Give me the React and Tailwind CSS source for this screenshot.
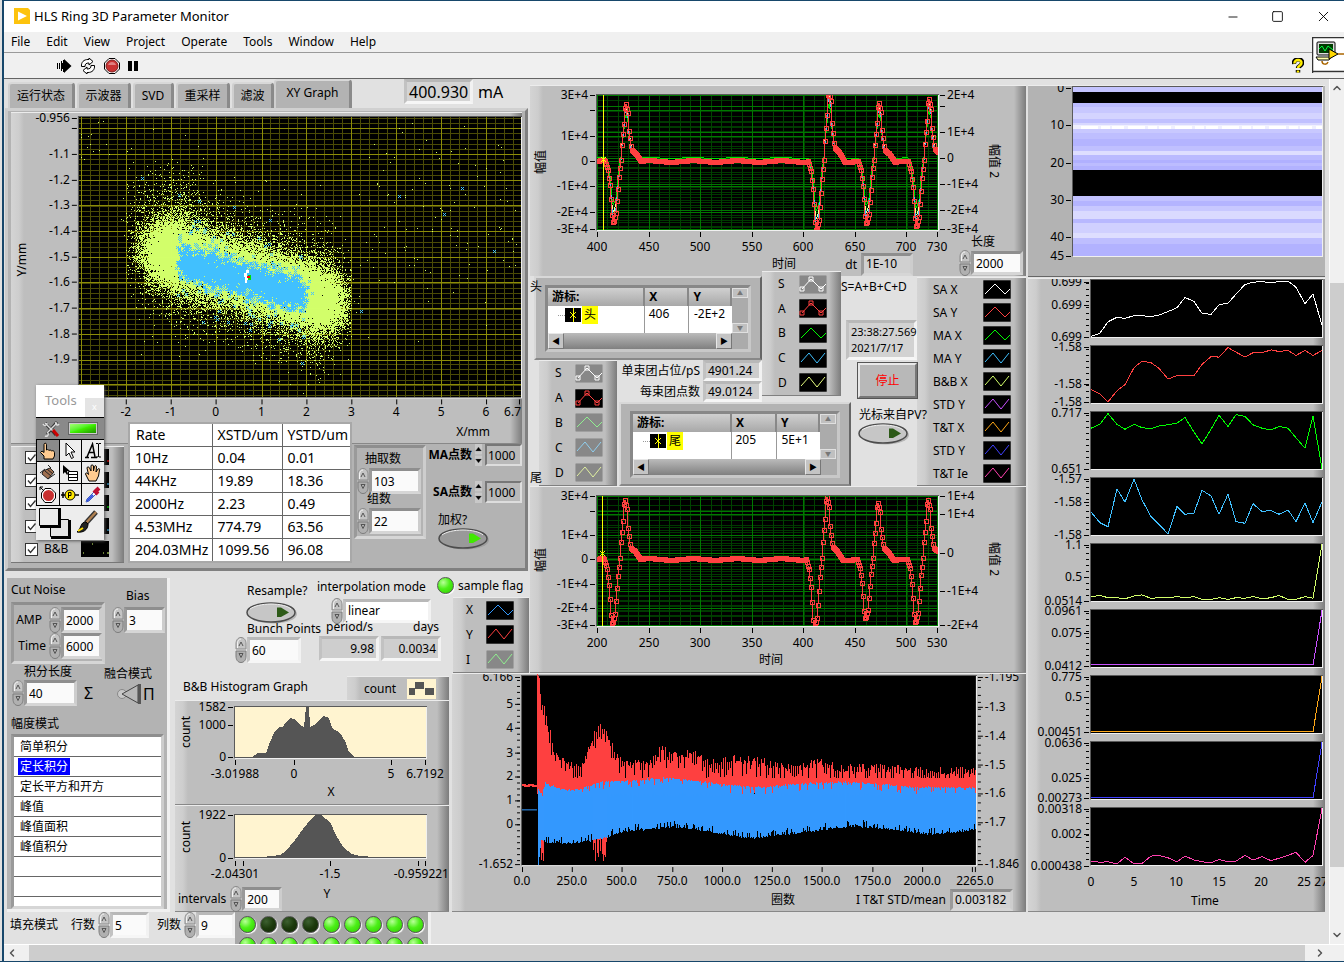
import { useId } from "react";
import clsx from "clsx";
import { ChevronDown, ChevronLeft, ChevronRight, ChevronUp, Minus, Square, X } from "lucide-react";

const PANEL =
  "bg-[linear-gradient(90deg,#d4d4d4_0,#cdcdcd_8px,#bebebe_13px,#bebebe_calc(100%-12px),#7c7c7c_100%)] border-t border-[#ececec]";
const INSET = "border-[3px] border-t-[#8e8e8e] border-l-[#9a9a9a] border-r-[#cdcdcd] border-b-[#d6d6d6]";
const INSET_LIGHT = "border-[3px] border-t-[#b8b8b8] border-l-[#c2c2c2] border-r-[#f2f2f2] border-b-[#f6f6f6]";

// ---------- data ----------

function random(seed) {
  let s = seed;
  return () => {
    s = (s * 1664525 + 1013904223) % 4294967296;
    return s / 4294967296;
  };
}

function gauss(rnd) {
  return Math.sqrt(-2 * Math.log(rnd() + 1e-9)) * Math.cos(2 * Math.PI * rnd());
}

function pixelPath(cells, left, top, width, height) {
  let d = "";
  for (let y = 0; y < height; y++) {
    let x = 0;
    while (x < width) {
      if (!cells[y * width + x]) {
        x++;
        continue;
      }
      let run = 1;
      while (x + run < width && cells[y * width + x + run]) run++;
      d += `M${left + x} ${top + y}.5h${run}`;
      x += run;
    }
  }
  return d;
}

function makeScatter() {
  const left = 79, top = 117, w = 443, h = 281;
  const green = new Uint8Array(w * h);
  const blue = new Uint8Array(w * h);
  const rnd = random(7);
  const plot = (cells, px, py) => {
    const x = Math.round(px) - left;
    const y = Math.round(py) - top;
    if (x >= 0 && x < w && y >= 0 && y < h) cells[y * w + x] = 1;
  };
  for (let i = 0; i < 62000; i++) {
    const t = rnd() < 0.55 ? Math.cos(rnd() * 2 * Math.PI) : rnd() * 2 - 1;
    const x = 244 + 82 * t + gauss(rnd) * 13;
    const wide = rnd() < 0.16 ? 29 : 15;
    const y = 276 + 26 * t + gauss(rnd) * wide;
    if ((x > 126 && x < 352) || rnd() < 0.08) plot(green, x, y);
  }
  for (let i = 0; i < 500; i++) {
    plot(green, 130 + rnd() * 70 + gauss(rnd) * 5, 215 + gauss(rnd) * 26);
  }
  for (let i = 0; i < 110; i++) {
    plot(green, 360 + rnd() * 160, 215 + gauss(rnd) * 45);
  }
  for (let i = 0; i < 14; i++) plot(green, 80 + rnd() * 30, 120 + rnd() * 40);
  const cross = (x, y) => {
    plot(blue, x, y);
    plot(blue, x - 1, y - 1);
    plot(blue, x + 1, y - 1);
    plot(blue, x - 1, y + 1);
    plot(blue, x + 1, y + 1);
  };
  for (let i = 0; i < 2900; i++) {
    const t = rnd() * 2 - 1;
    cross(242 + 61 * t + gauss(rnd) * 3, 278 + 17 * t + gauss(rnd) * 8);
  }
  for (let i = 0; i < 220; i++) {
    const t = rnd() * 2 - 1;
    cross(242 + 64 * t, 278 + 20 * t + gauss(rnd) * 22);
  }
  [[142, 178], [179, 195], [199, 201], [234, 207], [271, 220], [400, 196], [463, 188], [445, 214], [495, 251], [362, 311]].forEach(
    ([x, y]) => cross(x, y)
  );
  return [pixelPath(green, left, top, w, h), pixelPath(blue, left, top, w, h)];
}

const SCATTER = makeScatter();

// one bunch: negative swing, then positive swing with a tail
const BUNCH = [
  [-8, 0, 0], [-7, 0.05, 0], [-5, 0.15, 0], [-3, 0.4, 0], [-2, 0.62, 0], [-1, 0.88, 0], [0, 1, 0], [1, 0.98, 0], [3, 0.86, 0],
  [4, 0.66, 0], [6, 0.26, 0], [8, 0, 0.02], [9, 0, 0.28], [11, 0, 0.65], [12, 0, 0.93], [13, 0, 1], [15, 0, 0.84],
  [16, 0, 0.53], [18, 0, 0.26], [19, 0, 0.19], [23, 0, 0.13], [28, 0, 0],
];

function bunchWave(base, bunches, gain = 1, tail = 0) {
  const pts = [];
  for (let x = 597; x <= 938; x++) {
    let y = base + Math.sin(x / 7) * 0.7 - tail;
    for (const [cx, low, high] of bunches) {
      const dx = x - cx;
      if (dx < -8 || dx > 28) continue;
      const k = BUNCH.findIndex((b) => b[0] >= dx);
      const b = BUNCH[k];
      const a = BUNCH[Math.max(0, k - 1)];
      const f = b[0] === a[0] ? 0 : (dx - a[0]) / (b[0] - a[0]);
      const down = a[1] + (b[1] - a[1]) * f;
      const up = a[2] + (b[2] - a[2]) * f;
      y = base + (down * (low - base) + up * (high - base)) * gain - tail;
    }
    pts.push([x, y]);
  }
  return pts;
}

const toLine = (pts) => "M" + pts.map(([x, y]) => `${x} ${y.toFixed(1)}`).join("L");

function lerpKeys(keys, x) {
  const k = keys.findIndex((p) => p[0] >= x);
  if (k <= 0) return keys[k === 0 ? 0 : keys.length - 1][1];
  const [x0, y0] = keys[k - 1];
  const [x1, y1] = keys[k];
  return y0 + ((y1 - y0) * (x - x0)) / (x1 - x0);
}

const RED_TOP = [
  [537, 676], [539, 680], [541, 700], [545, 706], [547, 722], [550, 732], [554, 750], [560, 758], [570, 764], [584, 761],
  [590, 742], [596, 726], [602, 722], [606, 732], [612, 744], [618, 758], [630, 760], [652, 759], [662, 745], [670, 752],
  [690, 750], [698, 752], [710, 762], [722, 758], [740, 757], [760, 759], [790, 765], [822, 760], [840, 766], [880, 765],
  [920, 768], [978, 769],
];
const BLUE_TOP = [
  [537, 676], [538, 790], [541, 794], [545, 783], [560, 789], [575, 790], [600, 782], [650, 778], [670, 777], [695, 780],
  [725, 785], [765, 787], [800, 784], [840, 782], [870, 783], [910, 787], [978, 788],
];
const BLUE_LOW = [
  [537, 676], [538, 866], [541, 842], [550, 845], [575, 845], [600, 841], [622, 834], [650, 831], [672, 829], [695, 831],
  [735, 838], [756, 840], [790, 836], [830, 831], [858, 828], [900, 832], [930, 836], [950, 835], [978, 831],
];

function makeBeam() {
  const rnd = random(21);
  let red = "";
  let blue = "";
  for (let x = 537; x < 978; x++) {
    const jump = x % 2 ? rnd() * 22 : rnd() * 9;
    const top = Math.min(778, lerpKeys(RED_TOP, x) - 2 + (x < 540 ? 0 : jump));
    let low = 794 + rnd() * 4;
    if (x > 539 && x < 544) low = 848 + rnd() * 18;
    if (x > 592 && x < 607) low = 840 + rnd() * 22;
    red += `M${x}.5 ${top.toFixed(0)}V${low.toFixed(0)}`;
    const notch = rnd() < 0.25 ? rnd() * 9 : rnd() * 2;
    const spike = rnd() < 0.35 ? rnd() * 8 : rnd() * 2;
    const bt = lerpKeys(BLUE_TOP, x) + (x < 539 ? 0 : notch);
    const bl = lerpKeys(BLUE_LOW, x) - (x < 540 ? 0 : spike);
    blue += `M${x}.5 ${bt.toFixed(0)}V${bl.toFixed(0)}`;
  }
  return [red, blue];
}

const BEAM = makeBeam();

const flat = (v, last = 0) => [...Array(27).fill(v), last];

const STRIPS = [
  { y: 280, color: "#ffffff", labels: [[282, "0.699"], [305, "0.699"], [337, "0.699"]], max: 99,
    data: [99, 93, 73, 65, 67, 62, 62, 64, 61, 55, 48, 30, 37, 58, 60, 43, 40, 24, 7, 3, 2, 4, 2, 1, 12, 41, 24, 79] },
  { y: 346, color: "#ff4040", labels: [[347, "-1.58"], [384, "-1.58"], [402, "-1.58"]], max: 100,
    data: [77, 85, 99, 79, 68, 38, 26, 29, 39, 58, 52, 52, 52, 32, 18, 19, 2, 10, 19, 11, 11, 6, 9, 7, 16, 7, 16, 7] },
  { y: 412, color: "#00ff00", labels: [[413, "0.717"], [469, "0.651"]], max: 100,
    data: [28, 21, 2, 21, 30, 21, 27, 29, 24, 22, 19, 9, 35, 56, 30, 5, 25, 4, 7, 22, 28, 31, 25, 28, 45, 64, 7, 100] },
  { y: 478, color: "#40c0ff", labels: [[479, "-1.57"], [502, "-1.58"], [535, "-1.58"]], max: 100,
    data: [60, 79, 86, 19, 42, 1, 38, 68, 82, 99, 50, 64, 62, 21, 31, 64, 28, 77, 80, 45, 59, 57, 64, 56, 77, 44, 79, 42] },
  { y: 544, color: "#d3ff6a", labels: [[545, "1.1"], [577, "0.5"], [601, "0.0514"]], max: 100,
    data: [93, 91, 95, 95, 97, 92, 90, 96, 95, 95, 93, 95, 93, 98, 98, 95, 98, 95, 96, 93, 97, 95, 91, 98, 98, 93, 96, 0] },
  { y: 610, color: "#c850ff", labels: [[611, "0.0961"], [633, "0.075"], [666, "0.0412"]], max: 100, data: flat(97) },
  { y: 676, color: "#ffa818", labels: [[677, "0.775"], [697, "0.5"], [732, "0.00451"]], max: 100, data: flat(99) },
  { y: 742, color: "#4040ff", labels: [[743, "0.0636"], [778, "0.025"], [798, "0.00273"]], max: 100, data: flat(99) },
  { y: 808, color: "#ff40b0", labels: [[809, "0.00318"], [834, "0.002"], [866, "0.000438"]], max: 100,
    data: [94, 96, 95, 99, 87, 99, 98, 85, 84, 88, 95, 85, 92, 95, 97, 91, 95, 94, 84, 92, 86, 93, 89, 84, 78, 96, 84, 0] },
];

const BANDS = [
  [87, 92, "#c4c4ff"], [92, 103, "#000"], [103, 107, "#bcbcff"], [107, 113, "#c8c8ff"], [113, 119, "#d4d4ff"],
  [119, 123, "#c0c0ff"], [123, 125, "#d8d8ff"], [125, 129, "#efefff"], [129, 133, "#c8c8ff"], [133, 139, "#bebeff"],
  [139, 146, "#b4b4ff"], [146, 151, "#c0c0ff"], [151, 155, "#dedeff"], [155, 160, "#babaff"], [160, 163, "#b0b0ff"],
  [163, 166, "#bcbcff"], [166, 170, "#b2b2ff"], [170, 196, "#000"], [196, 201, "#c2c2ff"], [201, 206, "#b4b4ff"],
  [206, 211, "#c8c8ff"], [211, 219, "#dadaff"], [219, 223, "#b8b8ff"], [223, 233, "#d0d0ff"], [233, 238, "#dedeff"],
  [238, 244, "#bebeff"], [244, 256, "#b2b2ff"],
];

// ---------- chart helpers ----------

function Chart({ box, label, children }) {
  return (
    <svg
      viewBox={box}
      role="img"
      aria-label={label}
      className="block w-full overflow-hidden text-xs"
      fontFamily='"Noto Sans", "Noto Sans CJK SC", sans-serif'
    >
      {children}
    </svg>
  );
}

function Label({ x, y, anchor = "middle", children, ...rest }) {
  return (
    <text x={x} y={y + 4} textAnchor={anchor} {...rest}>
      {children}
    </text>
  );
}

function XAxis({ y, ticks, drop = 15 }) {
  return ticks.map(([x, text]) => (
    <g key={x}>
      <path d={`M${x + 0.5} ${y}v5`} stroke="#000" />
      {text && <Label x={x} y={y + drop}>{text}</Label>}
    </g>
  ));
}

function YAxis({ x, ticks, right }) {
  return ticks.map(([y, text]) => (
    <g key={y}>
      <path d={`M${x} ${y + 0.5}h${right ? 5 : -5}`} stroke="#000" />
      {text && <Label x={right ? x + 7 : x - 7} y={y} anchor={right ? "start" : "end"}>{text}</Label>}
    </g>
  ));
}

function lines(from, to, step, a, b, vertical) {
  let d = "";
  for (let v = from; v <= to; v += step) {
    const p = Math.round(v) + 0.5;
    d += vertical ? `M${p} ${a}V${b}` : `M${a} ${p}H${b}`;
  }
  return d;
}

function PlotFrame({ x, y, w, h, fill = "#000" }) {
  return (
    <>
      <rect x={x - 1} y={y - 1} width={w + 2} height={h + 2} fill="#f0f0f0" />
      <path d={`M${x - 1} ${y + h + 1}V${y - 1}H${x + w + 1}V${y}H${x}V${y + h}z`} fill="#5a5a5a" />
      <rect x={x} y={y} width={w} height={h} fill={fill} />
    </>
  );
}

function WaveChart({ box, label, top, bottom, base, bunches, left, right, x, cursor, extra, xLabelY }) {
  const pts = bunchWave(base, bunches);
  const dense = pts.filter(([, y], i) => i > 0 && Math.abs(y - pts[i - 1][1]) < 2);
  const clip = useId();
  return (
    <Chart box={box} label={label}>
      <clipPath id={clip}>
        <rect x="597" y={top} width="341" height={bottom - top} />
      </clipPath>
      <PlotFrame x={597} y={top} w={341} h={bottom - top} />
      <g clipPath={`url(#${clip})`} fill="none" shapeRendering="crispEdges">
        <path d={lines(left[2][0] - 40.6, bottom, 5.08, 597, 938)} stroke="#003a00" />
        <path d={lines(right[2][0] - 26, bottom, 5.2, 597, 938)} stroke="#003a00" />
        <path d={lines(597, 938, 10.33, top, bottom, true)} stroke="#004400" />
        <path d={x.map(([p]) => `M${p + 0.5} ${top}V${bottom}`).join("")} stroke="#007800" />
        <path d={[...left, ...right].map(([p]) => `M597 ${p + 0.5}H938`).join("")} stroke="#007800" />
        {extra && (
          <>
            <path d={toLine(bunchWave(base, bunches, 0.88, 3))} stroke="#f0ff90" />
            <path d={toLine(bunchWave(base, bunches, 0.76, 3))} stroke="#00e000" />
            <path d={toLine(bunchWave(base, bunches, 0.9, 0))} stroke="#40c0ff" />
          </>
        )}
        <path d={toLine(pts)} stroke="#ff4040" />
        <path d={pts.map(([px, py]) => `M${px - 2} ${Math.round(py) - 2}h4v4h-4z`).join("")} stroke="#ff4040" transform="translate(.5 .5)" />
        <path d={dense.map(([px, py]) => `M${px}.5 ${Math.round(py) - 2}v5`).join("")} stroke="#ff4040" />
        <path d={`M${cursor[0] + 0.5} ${top}V${bottom}`} stroke="#ffff00" />
        <path d={`M${cursor[0] - 2} ${cursor[1] - 2}l5 5m0 -5l-5 5`} stroke="#ffff00" />
      </g>
      <YAxis x={595} ticks={left} />
      <YAxis x={940} ticks={right} right />
      <XAxis y={bottom + 2} ticks={x} />
      <text transform={`translate(545 ${base + 1}) rotate(-90)`} textAnchor="middle">幅值</text>
      <text transform={`translate(990 ${base}) rotate(90)`} textAnchor="middle">幅值 2</text>
      <Label x={extra ? 784 : 771} y={xLabelY}>时间</Label>
    </Chart>
  );
}

// ---------- small controls ----------

function Spinner({ className }) {
  return (
    <svg viewBox="0 0 12 26" className={clsx("h-[26px] w-3 shrink-0", className)} aria-hidden="true">
      <path d="M1 12V7C1 3 3 .5 6 .5S11 3 11 7v5z" fill="#c4c4c4" stroke="#8d8d8d" />
      <path d="M1 14v5c0 4 2 6.500 5 6.500s5-2.500 5-6.500v-5z" fill="#b0b0b0" stroke="#7d7d7d" />
      <path d="M2.500 11V7c0-3 1-5 3.500-5" fill="none" stroke="#f4f4f4" />
      <path d="M4 9l2-4 2 4" fill="none" stroke="#555" />
      <path d="M4 16.500h4l-2 4z" fill="none" stroke="#555" />
    </svg>
  );
}

function NumberInput({ id, value, className, light }) {
  return (
    <span className="flex items-center">
      <Spinner />
      <input
        id={id}
        defaultValue={value}
        className={clsx("min-w-0 bg-[#fafafa] px-[2px] leading-4 outline-none", light ? INSET_LIGHT : INSET, className)}
      />
    </span>
  );
}

function Toggle({ id, on }) {
  return (
    <button id={id} type="button" aria-pressed={on} className="block h-[22px] w-[52px]">
      <svg viewBox="0 0 52 22" className="block" aria-hidden="true">
        <ellipse cx="27" cy="12" rx="24" ry="9.500" fill="#8a8a8a" opacity=".5" />
        <ellipse cx="25" cy="10.500" rx="24" ry="9.500" fill={on ? "#999" : "#c6c6c6"} stroke="#4c4c4c" strokeWidth="1.500" />
        <path d="M4 7c4-3 12-5 21-5s17 2 20 5" fill="none" stroke="#eee" />
        <path d="M31 5.500l4 0 8 5-8 4.500-4 0z" fill={on ? "#40e800" : "#2d5a18"} />
      </svg>
    </button>
  );
}

function Led({ off }) {
  return (
    <span
      className={clsx(
        "block size-[17px] shrink-0 rounded-full border border-[#555] shadow-[1px_1px_1px_#fff]",
        off
          ? "bg-[radial-gradient(circle_at_35%_30%,#3d6030,#1c3a0c_50%,#122806)]"
          : "bg-[radial-gradient(circle_at_35%_30%,#b8ff98,#4cf018_45%,#30c800)]"
      )}
    />
  );
}

const SHAPES = {
  marks: "M3 14L12 4L22 14L27 9",
  hill: "M2 14L12 4L22 14L27 9",
  zig: "M2 13L10 4L18 14L26 4",
};

function Swatch({ color, shape = "hill", dim }) {
  return (
    <svg viewBox="0 0 28 19" className="block h-[19px] w-7 shrink-0" aria-hidden="true">
      <rect width="28" height="19" fill={dim ? "#888" : "#000"} stroke={dim ? "#e8e8e8" : "#ddd"} strokeWidth=".5" />
      <path d={SHAPES[shape]} fill="none" stroke={color} />
      {shape === "marks" && <path d="M1 12h4v4h-4zM10 2h4v4h-4zM20 12h4v4h-4z" fill="none" stroke={color} />}
    </svg>
  );
}

function Legend({ items, className, rowClass }) {
  return (
    <ul className={clsx("flex flex-col border-b border-b-[#808080]", PANEL, className)}>
      {items.map(([name, color, shape, dim], i) => (
        <li key={i} className={clsx("flex items-center justify-between", rowClass)}>
          <span>{name}</span>
          <Swatch color={color} shape={shape} dim={dim} />
        </li>
      ))}
    </ul>
  );
}

// ---------- window chrome ----------

function TitleBar() {
  return (
    <header className="flex h-8 shrink-0 items-center justify-between border-t border-[#17476b] bg-white pl-[10px]">
      <div className="flex items-center gap-1">
        <svg viewBox="0 0 16 16" className="size-4" aria-hidden="true">
          <path d="M0 0h14l2 2v14H0z" fill="#fdc30d" />
          <path d="M4 3.500v9l9-4.500z" fill="#fff" />
        </svg>
        <h1 className="text-[13px]">HLS Ring 3D Parameter Monitor</h1>
      </div>
      <div className="flex items-center gap-[31px] pr-[12px]">
        <button aria-label="Minimize"><Minus size={14} strokeWidth={1.5} /></button>
        <button aria-label="Maximize"><Square size={13} strokeWidth={1.6} /></button>
        <button aria-label="Close"><X size={17} strokeWidth={1.3} /></button>
      </div>
    </header>
  );
}

function MenuBar() {
  const menus = ["File", "Edit", "View", "Project", "Operate", "Tools", "Window", "Help"];
  return (
    <nav className="flex h-[21px] shrink-0 items-center gap-4 border-b border-[#9a9a9a] bg-[#f0f0f0] pl-[7px]">
      {menus.map((m) => (
        <button key={m}>{m}</button>
      ))}
    </nav>
  );
}

function Toolbar() {
  return (
    <div className="relative flex h-[26px] shrink-0 items-center gap-[7px] border-b border-[#646464] bg-[#f0f0f0] pl-[53px]">
      <button aria-label="Run">
        <svg viewBox="0 0 16 14" className="h-[14px] w-4" aria-hidden="true">
          <path d="M7 4V0l7.500 7L7 14v-4H5V4z" fill="#000" />
          <path d="M.5 4v6M2.500 4v6M4.500 2v2M4.500 10v2M4.500 4v6M6.500 1v3M6.500 10v3" stroke="#000" />
        </svg>
      </button>
      <button aria-label="Run continuously">
        <svg viewBox="0 0 16 16" className="size-4" fill="#fff" stroke="#000" aria-hidden="true">
          <path d="M1.500 8.500C1 4 4 1.500 8 1.500h1V0l4 3.500L9 7V5C6 5 5 6 5 8.500z" />
          <path d="M14.500 7.500c.5 4.500-2.500 7-6.500 7H7V16l-4-3.500L7 9v2c3 0 4-1 4-3.500z" />
        </svg>
      </button>
      <button aria-label="Abort">
        <svg viewBox="0 0 16 16" className="ml-px size-4" aria-hidden="true">
          <path d="M5 .5h6L15.500 5v6L11 15.500H5L.5 11V5z" fill="#fff" stroke="#000" />
          <circle cx="8" cy="8" r="6" fill="#c93333" stroke="#7c1c1c" />
          <path d="M4 7c1-4 7-4 8 0z" fill="#e08080" />
        </svg>
      </button>
      <button aria-label="Pause">
        <svg viewBox="0 0 10 10" className="ml-px size-[10px]" aria-hidden="true">
          <path d="M0 0h4v10H0zM6 0h4v10H6z" />
        </svg>
      </button>
      <button aria-label="Help" className="mr-10 ml-auto">
        <svg viewBox="0 0 12 16" className="h-4 w-3" aria-hidden="true">
          <path d="M2 6C1 0 11 0 10 5c0 3-4 3-4 5M6 12v2.500" fill="none" stroke="#000" strokeWidth="4.500" />
          <path d="M2.500 5.500C2 .8 10 .8 9.500 5c0 2.500-3.500 3-3.500 5M6 12.500v2" fill="none" stroke="#ffee00" strokeWidth="2.500" />
        </svg>
      </button>
      <svg viewBox="0 0 32 36" className="absolute right-0 bottom-[5px] h-9 w-8" aria-hidden="true">
        <path d="M0 0h32v36H0z" fill="#fff" />
        <path d="M.5 36V.5H32M0 34.500H32" fill="none" stroke="#333" strokeWidth="1.500" />
        <rect x="5" y="5" width="18" height="13" rx="1" fill="#ddd" stroke="#000" />
        <rect x="7" y="7" width="14" height="9" fill="#003c00" />
        <path d="M7 12l3-3 3 5 3-5 5 4" fill="none" stroke="#00ff40" />
        <path d="M4 20h15l-2 3H6z" fill="#ffa" stroke="#000" />
        <path d="M17 12l9 5-9 5z" fill="#ffd800" stroke="#000" />
        <path d="M26 17h6M10 24c0 4 5 4 6 1" fill="none" stroke="#a60" strokeWidth="1.500" />
      </svg>
    </div>
  );
}

// ---------- XY graph tab ----------

function XYGraph() {
  const xs = [81, 126, 171, 216, 262, 307, 352, 397, 442, 487];
  const ys = [["", 128], ["-1.1", 154], ["-1.2", 180], ["-1.3", 205], ["-1.4", 231], ["-1.5", 257], ["-1.6", 282], ["-1.7", 308], ["-1.8", 334], ["-1.9", 360]];
  return (
    <Chart box="11 113 512 331" label="XY Graph">
      <PlotFrame x={79} y={117} w={443} h={281} />
      <g shapeRendering="crispEdges">
        <path d={lines(81, 521, 9.03, 117, 398, true) + lines(118, 398, 5.15, 79, 522)} stroke="#4b4b06" />
        <path d={xs.map((x) => `M${x + 0.5} 117V398`).join("") + [...ys, ["", 385]].map((y) => `M79 ${y[1] + 0.5}H522`).join("")} stroke="#8d8d08" />
        <path d={SCATTER[0]} stroke="#d3ff6a" />
        <path d={SCATTER[1]} stroke="#40c0ff" />
        <path d="M246 270h3v3h-2v3h2v4h-2v3h-2v-6h-1v-4h2z" fill="#fff" />
        <path d="M248 275h3v5h-3z" fill="#00e000" />
        <path d="M247 276h3v2h-3z" fill="#f00" />
      </g>
      <YAxis x={77} ticks={[[118, "-0.956"], ...ys.map(([t, y]) => [y, t])]} />
      <XAxis
        y={400}
        drop={13}
        ticks={[[126, "-2"], [171, "-1"], [216, "0"], [262, "1"], [307, "2"], [352, "3"], [397, "4"], [442, "5"], [487, "6"], [520, ""]]}
      />
      <Label x={522} y={413} anchor="end">6.7</Label>
      <text transform="translate(26 260) rotate(-90)" textAnchor="middle">Y/mm</text>
      <Label x={474} y={433}>X/mm</Label>
    </Chart>
  );
}

const RATES = [
  ["10Hz", "0.04", "0.01"],
  ["44KHz", "19.89", "18.36"],
  ["2000Hz", "2.23", "0.49"],
  ["4.53MHz", "774.79", "63.56"],
  ["204.03MHz", "1099.56", "96.08"],
];

function RateTable() {
  return (
    <table className="relative z-10 -mt-5 w-[220px] table-fixed border-collapse bg-white text-sm leading-[22px] outline-2 outline-[#a8a8a8]">
      <thead>
        <tr className="border-b border-[#666]">
          <th className="w-[82px] border-r border-[#666] pl-[6px] text-left font-normal">Rate</th>
          <th className="w-[70px] border-r border-[#666] pl-[5px] text-left font-normal">XSTD/um</th>
          <th className="pl-[5px] text-left font-normal">YSTD/um</th>
        </tr>
      </thead>
      <tbody>
        {RATES.map((row) => (
          <tr key={row[0]} className="border-b border-[#666] last:border-0">
            <td className="border-r border-[#666] pl-[5px]">{row[0]}</td>
            <td className="border-r border-[#666] pl-[5px]">{row[1]}</td>
            <td className="pl-[5px]">{row[2]}</td>
          </tr>
        ))}
      </tbody>
    </table>
  );
}

function PlotList() {
  const rows = [["SA", "#f00"], ["SA Y", "#40c0ff"], ["MA", "#0f0"], ["MA Y", "#40c0ff"], ["B&B", "#d3ff6a"]];
  return (
    <div className={clsx("mt-[2px] ml-[3px] flex h-[117px] w-[113px] flex-col justify-between border-b border-b-[#777] pt-px pb-[4px] pr-[14px] pl-[14px]", PANEL)}>
      {rows.map(([name, color]) => (
        <label key={name} className="flex h-[18px] items-center">
          <input type="checkbox" defaultChecked className="size-[13px] shrink-0 appearance-none border border-[#333] bg-white" />
          <svg viewBox="0 0 13 13" className="-ml-[13px] size-[13px] shrink-0" aria-hidden="true">
            <path d="M3 6.500l2.500 3L10.500 3.500" fill="none" stroke="#333" strokeWidth="1.300" />
          </svg>
          <span className="ml-[6px] w-[37px]">{name}</span>
          <svg viewBox="0 0 28 16" className="h-4 w-7 shrink-0" aria-hidden="true">
            <path d="M0 0h28v16H0z" />
            <path d="M2 12h1M11 3h1M22 12h1M26 12h2" stroke={color} />
          </svg>
        </label>
      ))}
    </div>
  );
}

function PointCount({ id, label }) {
  return (
    <div className="flex items-center justify-end gap-[3px]">
      <label htmlFor={id} className="font-bold">{label}</label>
      <svg viewBox="0 0 7 22" className="h-[22px] w-[7px] bg-[#c8c8c8]" aria-hidden="true">
        <path d="M0.500 7h6L3.500 3zM0.500 15h6l-3 4zM0 11h7" stroke="#777" strokeWidth=".3" />
      </svg>
      <input id={id} defaultValue="1000" className="h-[22px] w-[37px] border-2 border-t-[#777] border-r-[#ddd] border-b-[#ddd] border-l-[#777] bg-[#b9b9b9] px-px outline-none" />
    </div>
  );
}

function ToolsPalette() {
  const cell = "flex items-center justify-center border-t border-l border-black bg-[#ededed]";
  return (
    <div className="absolute top-[306px] left-[31px] z-20 w-[68px] bg-[#ededed] shadow-[1px_1px_3px_#555]">
      <div className="flex h-8 items-center justify-between bg-white pl-[9px] text-[13px] text-[#999]">
        Tools
        <button aria-label="Close tools" className="mt-3 flex h-[19px] w-[19px] items-center justify-center bg-[#e4e4e4] text-[9px] text-white">x</button>
      </div>
      <div className="flex h-[22px] items-center justify-between border-t border-black bg-[#8a8a8a] pr-[7px] pl-[6px]">
        <svg viewBox="0 0 18 18" className="size-[18px]" aria-hidden="true">
          <path d="M3 3l11 12M15 2L5 14" stroke="#333" strokeWidth="3" />
          <path d="M3 3l8 8M15 3L5 13" stroke="#ddd" strokeWidth="1.500" />
          <path d="M11 10l5 6" stroke="#c00" strokeWidth="3" />
          <path d="M1 4c1 2 4 2 4-1M17 4c-1 2-4 1-3-2M3 16c2 1 4-1 3-3" fill="none" stroke="#ddd" strokeWidth="1.500" />
        </svg>
        <span className="h-[11px] w-7 border border-[#ccc] bg-linear-to-br from-[#a0ff70] via-[#40f000] to-[#209000] outline-1 outline-[#666]" />
      </div>
      <div className="grid h-[66px] grid-cols-3 grid-rows-3">
        <button aria-label="Operate value" className={clsx(cell, "bg-[#8a8a8a]!")}>
          <svg viewBox="0 0 18 18" className="size-[18px]" fill="#ffcb90" stroke="#000">
            <path d="M5 17v-3L1.500 10.500 3 9l2 1.500V2.500C5 .8 7.500.8 7.500 2.500V8c1-1 2.500 0 2.500.5 1-1 2.500 0 2.500.5 1-.8 3 0 3 1.500V14l-1.500 3z" />
          </svg>
        </button>
        <button aria-label="Position" className={cell}>
          <svg viewBox="0 0 18 18" className="size-[18px]" fill="#fff" stroke="#000">
            <path d="M5 1v13l3-3 2.500 5.500 2-1L10 10h4z" />
          </svg>
        </button>
        <button aria-label="Edit text" className={cell}>
          <svg viewBox="0 0 18 18" className="size-[18px]" fill="none" stroke="#000">
            <path d="M1 15.500h4M7 15.500h6M3 15L8.500 2L11 15M5 10.500h5" strokeWidth="1.500" />
            <path d="M12 1.500h2l.5 1 .5-1h2M14.500 2v12M12 15h2l.5-1 .5 1h2" />
          </svg>
        </button>
        <button aria-label="Connect wire" className={cell}>
          <svg viewBox="0 0 18 18" className="size-[18px]">
            <path d="M4 7l7-3 4 4-6 7-6-5z" fill="#a07050" stroke="#222" />
            <path d="M6 7l6 5M8 5l6 5M1 9l5-4M9 15l7-5M9 1l3 3" stroke="#222" />
          </svg>
        </button>
        <button aria-label="Object shortcut menu" className={cell}>
          <svg viewBox="0 0 18 18" className="size-[18px]">
            <path d="M2 1v9l2-2 2 3 1-1-1-3h3z" />
            <path d="M7.500 7.500h9v9h-9zM7.500 10.500h9M7.500 13.500h9" fill="#fff" stroke="#000" />
          </svg>
        </button>
        <button aria-label="Scroll window" className={cell}>
          <svg viewBox="0 0 18 18" className="size-[18px]" fill="#ffcb90" stroke="#000">
            <path d="M5 17L1.500 10c0-1.500 1.500-1.500 3 .5L3 4c0-1.500 2-1.500 2.500 0L7 7V2c0-1.500 2-1.500 2.500 0V7l1-4.500c.5-1.500 2-1 2 .5L12 8l2-3c1-1 2 0 1.500 1L14.500 12 12 17z" />
          </svg>
        </button>
        <button aria-label="Set breakpoint" className={cell}>
          <svg viewBox="0 0 18 18" className="size-[18px]">
            <path d="M6 2.500h6L16.500 7v5L13 16.500H6L2.500 12V7z" fill="#fff" stroke="#000" />
            <circle cx="9.500" cy="9.500" r="5.500" fill="#c83030" />
            <path d="M1 1l4 4M1 1h3M1 1v3" stroke="#000" />
          </svg>
        </button>
        <button aria-label="Probe data" className={cell}>
          <svg viewBox="0 0 18 18" className="size-[18px]">
            <path d="M0 9h18M2 6v6" stroke="#000" strokeWidth="1.500" />
            <circle cx="9" cy="9" r="5" fill="#ffe800" stroke="#000" />
            <path d="M7.500 12V6.500h2.500v3H8" fill="none" stroke="#000" />
          </svg>
        </button>
        <button aria-label="Get color" className={cell}>
          <svg viewBox="0 0 18 18" className="size-[18px]">
            <path d="M2 16l1-3 8-8 2 2-8 8z" fill="#fff" stroke="#4060c0" />
            <path d="M3 15l6-6" stroke="#3050e0" strokeWidth="2" />
            <path d="M10 4l4 4M12 5l3-3" stroke="#c01030" strokeWidth="4" />
          </svg>
        </button>
      </div>
      <button aria-label="Set color" className="block h-[35px] w-full border-t border-black">
        <svg viewBox="0 0 68 34" className="block" aria-hidden="true">
          <path d="M15 14h20v19H15z" />
          <path d="M14.500 13.500h18v17h-18z" fill="#e4e4e4" stroke="#000" />
          <path d="M4 2h21v20H4z" />
          <path d="M3.500 2.500h19v17h-19z" fill="#ececec" stroke="#000" />
          <path d="M60 6L50 17" stroke="#333" strokeWidth="5" />
          <path d="M60 6L50 17" stroke="#b08050" strokeWidth="2.500" />
          <path d="M50 16c-6 0-4 6-9 10 6 1 11-2 11-8z" stroke="#000" fill="#222" />
          <path d="M42 25l5-3" stroke="#fd0" strokeWidth="2" />
        </svg>
      </button>
    </div>
  );
}

function XYTab() {
  const tabs = [["运行状态", "w-[67px]"], ["示波器", "w-[54px]"], ["SVD", "w-[41px]"], ["重采样", "w-[54px]"], ["滤波", "w-[42px]"]];
  return (
    <section className="relative col-span-3 mr-px flex flex-col">
      <div className="flex h-[29px] items-end pl-[3px]">
        <div role="tablist" className="flex items-end gap-[2px]">
          {tabs.map(([name, w]) => (
            <button
              key={name}
              role="tab"
              className={clsx("h-[26px] rounded-t-sm border-t-2 border-r-[3px] border-l-2 border-t-[#d8d8d8] border-r-[#8a8a8a] border-l-[#cfcfcf] bg-[#b3b3b3] text-center", w)}
            >
              {name}
            </button>
          ))}
          <button
            role="tab"
            aria-selected="true"
            className="-ml-[2px] h-[29px] w-[78px] rounded-t-sm border-t-2 border-r-[3px] border-l-2 border-t-[#d8d8d8] border-r-[#8a8a8a] border-l-[#cfcfcf] bg-[#b3b3b3] pb-1 text-center"
          >
            XY Graph
          </button>
        </div>
        <div className="ml-[52px] flex items-center gap-[5px] self-start text-base leading-5">
          <output aria-label="Beam current" className={clsx("h-[25px] w-[69px] bg-[#d4d4d4] px-[2px]", INSET_LIGHT)}>400.930</output>
          <span>mA</span>
        </div>
      </div>
      <div className="flex-1 border-[3px] border-t-[#d0d0d0] border-r-[#808080] border-b-[#808080] border-l-[#cacaca] bg-[#b3b3b3]">
        <div className={clsx("mx-[3px] mt-px border-b border-b-[#888]", PANEL)}>
          <XYGraph />
        </div>
        <div className="flex items-start">
          <PlotList />
          <div className="ml-[6px]">
            <RateTable />
          </div>
          <div className={clsx("mt-px ml-[4px] flex h-[94px] w-[72px] flex-col gap-px bg-[#b3b3b3] pt-[3px]", INSET)}>
            <label htmlFor="extract" className="pl-[8px] leading-4">抽取数</label>
            <NumberInput id="extract" value="103" className="h-[26px] w-[52px]" />
            <label htmlFor="groups" className="-mt-1 pl-[10px] leading-4">组数</label>
            <NumberInput id="groups" value="22" className="h-[26px] w-[52px]" />
          </div>
          <div className="flex flex-1 flex-col gap-[15px] pr-[3px]">
            <PointCount id="ma" label="MA点数" />
            <PointCount id="sa" label="SA点数" />
            <div className="-mt-[6px] pl-[12px]">
              <label htmlFor="weight" className="leading-4">加权?</label>
              <Toggle id="weight" on />
            </div>
          </div>
        </div>
      </div>
      <ToolsPalette />
    </section>
  );
}

// ---------- middle column ----------

function CursorTable({ name, x, y, className }) {
  const head = "h-[18px] border-r-2 border-r-[#888] bg-linear-to-b from-[#d0d0d0] to-[#a8a8a8] pl-1 text-left font-bold";
  return (
    <div className={clsx("flex flex-col justify-end border-2 border-t-[#d8d8d8] border-r-[#666] border-b-[#888] border-l-[#d8d8d8] bg-[#b3b3b3] px-[9px] pb-[6px]", className)}>
      <div className="border-[3px] border-t-[#888] border-r-[#c8c8c8] border-b-[#c8c8c8] border-l-[#888] bg-[#ababab]">
        <div className="flex">
          <table className="table-fixed border-collapse bg-white leading-4">
            <thead>
              <tr>
                <th className={clsx(head, "w-[98px]")}>游标:</th>
                <th className={clsx(head, "w-[45px]")}>X</th>
                <th className={clsx(head, "w-[43px]")}>Y</th>
              </tr>
            </thead>
            <tbody>
              <tr className="h-[27px] align-top">
                <td className="border-r border-[#999]">
                  <div className="flex items-center pl-[10px]">
                    <span className="w-[7px] border-t border-dotted border-[#999]" />
                    <svg viewBox="0 0 16 14" className="h-[14px] w-4" aria-hidden="true">
                      <path d="M0 0h16v14H0z" />
                      <path d="M8.500 0v14M5 4l6 6M11 4l-6 6" stroke="#ffff00" />
                    </svg>
                    <span className="ml-px bg-[#ffff00] px-[2px] leading-[18px]">{name}</span>
                  </div>
                </td>
                <td className="border-r border-[#999] pl-1">{x}</td>
                <td className="pl-[5px]">{y}</td>
              </tr>
            </tbody>
          </table>
          <div className="flex w-4 flex-col justify-between">
            <button aria-label="Scroll up" className="flex h-[10px] items-center justify-center border border-[#e0e0e0] bg-[#c0c0c0] text-[6px] text-[#777]">▲</button>
            <button aria-label="Scroll down" className="flex h-[10px] items-center justify-center border border-[#e0e0e0] bg-[#c0c0c0] text-[6px] text-[#777]">▼</button>
          </div>
        </div>
        <div className="flex h-4 pr-4 text-[8px] leading-3">
          <button aria-label="Scroll left" className="w-4 border border-[#e8e8e8] border-r-[#777] border-b-[#777] bg-[#c4c4c4]">◀</button>
          <span className="flex-1 bg-linear-to-b from-[#bbb] to-[#808080]" />
          <button aria-label="Scroll right" className="w-4 border border-[#e8e8e8] border-r-[#777] border-b-[#777] bg-[#c4c4c4]">▶</button>
        </div>
      </div>
    </div>
  );
}

function MiddleControls() {
  return (
    <div className="relative grid h-[210px] grid-cols-[89px_143px_79px_10px_66px_minmax(0,1fr)] grid-rows-[84px_42px_84px]">
      <span className="absolute top-[3px] left-0 z-10 leading-4">头</span>
      <span className="absolute bottom-0 left-0 z-10 leading-4">尾</span>
      <CursorTable name="头" x="406" y="-2E+2" className="col-span-2 ml-1" />
      <Legend
        className="z-10 row-span-2 -mt-[5px] h-[125px] justify-around"
        rowClass="pl-[16px] pr-[14px]"
        items={[["S", "#fff", "marks", true], ["A", "#ff4040", "marks"], ["B", "#00ff00", "hill"], ["C", "#40c0ff", "zig"], ["D", "#e8ff80", "zig"]]}
      />
      <div className="relative z-10 col-span-2 col-start-4 row-span-3 row-start-1 flex flex-col">
        <span className="mt-[3px] whitespace-nowrap leading-4">S=A+B+C+D</span>
        <output aria-label="Timestamp" className={clsx("mt-[25px] ml-[5px] block bg-[#d2d2d2] px-[2px] py-px text-[11px] leading-4", INSET_LIGHT)}>
          23:38:27.569
          <br />
          2021/7/17
        </output>
        <button className="mt-[3px] ml-[17px] h-[35px] w-[59px] border-2 border-t-[#e8e8e8] border-r-[#777] border-b-[#777] border-l-[#e8e8e8] bg-[#b8b8b8] text-[#ff0000] outline-1 outline-[#555]">
          停止
        </button>
        <label htmlFor="pv" className="mt-[9px] ml-[18px] whitespace-nowrap leading-4">光标来自PV?</label>
        <span className="ml-[17px]">
          <Toggle id="pv" on={false} />
        </span>
      </div>
      <Legend
        className="col-start-6 row-span-3 row-start-1 mt-px justify-around"
        rowClass="pl-[16px] pr-[15px]"
        items={[
          ["SA X", "#fff"], ["SA Y", "#ff4040"], ["MA X", "#00ff00"], ["MA Y", "#40c0ff", "zig"], ["B&B X", "#d3ff6a", "zig"],
          ["STD Y", "#c850ff", "zig"], ["T&T X", "#ffa818", "zig"], ["STD Y", "#4040ff", "zig"], ["T&T Ie", "#ff40b0", "zig"],
        ]}
      />
      <Legend
        className="col-start-1 row-span-2 row-start-2 mr-[2px] ml-[9px] justify-around"
        rowClass="pl-[16px] pr-[14px]"
        items={[["S", "#fff", "marks", true], ["A", "#ff4040", "marks"], ["B", "#90f090", "hill", true], ["C", "#90d0f0", "zig", true], ["D", "#e0f0a0", "zig", true]]}
      />
      <div className="col-start-2 row-start-2 flex flex-col items-end">
        {[["单束团占位/pS", "4901.24"], ["每束团点数", "49.0124"]].map(([name, value]) => (
          <div key={name} className="flex items-center gap-[3px] whitespace-nowrap">
            <span>{name}</span>
            <output aria-label={name} className={clsx("h-[21px] w-[59px] bg-[#cdcdcd] px-[2px] leading-4", INSET_LIGHT)}>{value}</output>
          </div>
        ))}
      </div>
      <CursorTable name="尾" x="205" y="5E+1" className="col-span-3 col-start-2 row-start-3" />
    </div>
  );
}

function MiddleColumn() {
  return (
    <section className="row-span-2 flex flex-col px-px pt-[6px]">
      <div className={clsx("relative", PANEL)}>
        <WaveChart
          box="530 86 496 190"
          label="Head waveform"
          top={95}
          bottom={230}
          base={161}
          bunches={[[613, 222, 104], [816, 230, 90], [866, 223, 103], [916, 226, 99]]}
          left={[[95, "3E+4"], [110, ""], [136, "1E+4"], [161, "0"], [186, "-1E+4"], [212, "-2E+4"], [229, "-3E+4"]]}
          right={[[95, "2E+4"], [106, ""], [132, "1E+4"], [158, "0"], [184, "-1E+4"], [210, "-2E+4"], [229, "-3E+4"]]}
          x={[[597, "400"], [649, "450"], [700, "500"], [752, "550"], [803, "600"], [855, "650"], [906, "700"], [937, "730"]]}
          cursor={[603, 159]}
          xLabelY={264}
          extra
        />
        <div className="absolute right-[3px] bottom-0 flex items-end">
          <div className="mr-[46px] flex items-center gap-1">
            <span>dt</span>
            <output aria-label="dt" className={clsx("h-[23px] w-[52px] bg-[#d0d0d0] px-[2px] leading-4", INSET)}>1E-10</output>
          </div>
          <div className="flex flex-col">
            <label htmlFor="length" className="pl-[12px]">长度</label>
            <NumberInput id="length" value="2000" className="h-[24px] w-[52px]" />
          </div>
        </div>
      </div>
      <MiddleControls />
      <div className={clsx("border-b border-b-[#888]", PANEL)}>
        <WaveChart
          box="530 487 496 185"
          label="Tail waveform"
          top={496}
          bottom={626}
          base={559}
          bunches={[[612, 623, 500], [814, 628, 497], [865, 618, 503], [915, 622, 500]]}
          left={[[496, "3E+4"], [511, ""], [535, "1E+4"], [559, "0"], [584, "-1E+4"], [608, "-2E+4"], [625, "-3E+4"]]}
          right={[[496, "1E+4"], [514, "1E+4"], [553, "0"], [591, "-1E+4"], [625, "-2E+4"]]}
          x={[[597, "200"], [649, "250"], [700, "300"], [752, "350"], [803, "400"], [855, "450"], [906, "500"], [937, "530"]]}
          cursor={[602, 553]}
          xLabelY={660}
        />
      </div>
    </section>
  );
}

// ---------- lower left ----------

const MODES = ["简单积分", "定长积分", "定长平方和开方", "峰值", "峰值面积", "峰值积分", "", "", ""];

function NoisePanel() {
  return (
    <section className="row-span-2 mt-[7px] mr-[3px] ml-[2px] flex flex-col border-r-[3px] border-b-[3px] border-[#f0f0f0] bg-[#b3b3b3] pl-[4px]">
      <div className="flex">
        <div>
          <h2 className="pt-1 leading-4">Cut Noise</h2>
          <div className={clsx("mt-[4px] flex h-[62px] w-[94px] flex-col items-end justify-center", INSET)}>
            <div className="flex items-center gap-[7px]">
              <label htmlFor="amp">AMP</label>
              <NumberInput id="amp" value="2000" className="h-[26px] w-[41px]" />
            </div>
            <div className="flex items-center gap-[3px]">
              <label htmlFor="time">Time</label>
              <NumberInput id="time" value="6000" className="h-[26px] w-[41px]" />
            </div>
          </div>
        </div>
        <div className="ml-[7px] flex flex-col pt-[10px]">
          <label htmlFor="bias" className="pl-[14px] leading-4">Bias</label>
          <span className="mt-[3px]">
            <NumberInput id="bias" value="3" className="h-[26px] w-[41px]" />
          </span>
        </div>
      </div>
      <div className="flex">
        <div className="w-[93px]">
          <label htmlFor="intlen" className="block pl-[13px] leading-4">积分长度</label>
          <span className="flex items-center gap-[7px] pl-px">
            <NumberInput id="intlen" value="40" className="h-[26px] w-[53px]" />
            <span className="text-base leading-5">Σ</span>
          </span>
        </div>
        <div className="pt-[2px]">
          <span className="block leading-4">融合模式</span>
          <button aria-label="融合模式" className="flex items-center pl-[13px] text-base leading-6">
            <svg viewBox="0 0 25 20" className="mr-px h-5 w-[25px]" aria-hidden="true">
              <circle cx="5" cy="10" r="4.500" fill="#c8c8c8" stroke="#888" />
              <path d="M5 10L21 1v18z" fill="#b8b8b8" stroke="#444" />
              <path d="M21 0h3v20h-3z" fill="#555" />
            </svg>
            Π
          </button>
        </div>
      </div>
      <h2 className="pt-[8px] leading-5">幅度模式</h2>
      <ul role="listbox" aria-label="幅度模式" className={clsx("mr-[3px] flex-1 overflow-hidden bg-white", INSET)}>
        {MODES.map((mode, i) => (
          <li key={i} role="option" aria-selected={i === 1} className="h-5 border-b border-[#666] pt-px pl-[4px] leading-4">
            {mode && <span className={clsx("inline-block px-[2px] leading-[17px]", i === 1 && "bg-[#0000ff] text-white")}>{mode}</span>}
          </li>
        ))}
      </ul>
    </section>
  );
}

function SampleControls() {
  return (
    <section className="col-span-2 flex pt-[6px] pl-[60px]">
      <div className="flex w-[84px] shrink-0 flex-col whitespace-nowrap leading-4">
        <label htmlFor="resample" className="pt-[6px] pl-[14px]">Resample?</label>
        <span className="mt-[3px] pl-[13px]">
          <Toggle id="resample" on={false} />
        </span>
        <label htmlFor="bunch" className="-mt-[3px] pl-[14px]">Bunch Points</label>
        <span className="pl-[2px]">
          <NumberInput id="bunch" value="60" light className="h-[26px] w-[54px]" />
        </span>
      </div>
      <div className="flex w-[128px] shrink-0 flex-col leading-4">
        <label htmlFor="interp" className="mt-[2px] whitespace-nowrap">interpolation mode</label>
        <span className="mt-[3px] flex items-center pl-[14px]">
          <Spinner />
          <select id="interp" className={clsx("h-[24px] w-[88px] appearance-none bg-white px-[2px] leading-4", INSET_LIGHT)}>
            <option>linear</option>
          </select>
        </span>
        <div className="-mt-[5px] ml-[2px] flex gap-[2px]">
          <div>
            <span className="pl-[7px]">period/s</span>
            <output aria-label="period/s" className={clsx("mt-px block h-[25px] w-[60px] bg-[#cecece] px-[2px] text-right leading-5", INSET_LIGHT)}>9.98</output>
          </div>
          <div>
            <span className="block pr-[2px] text-right">days</span>
            <output aria-label="days" className={clsx("mt-px block h-[25px] w-[60px] bg-[#cecece] px-[2px] text-right leading-5", INSET_LIGHT)}>0.0034</output>
          </div>
        </div>
      </div>
      <div className="-ml-[8px] flex flex-1 flex-col">
        <div className="flex items-center gap-1 whitespace-nowrap leading-4">
          <Led />
          sample flag
        </div>
        <Legend
          className="mt-[3px] ml-[16px] flex-1 justify-around"
          rowClass="pl-[13px] pr-[15px]"
          items={[["X", "#3399ff", "hill"], ["Y", "#ff4040", "zig"], ["I", "#90f090", "zig", true]]}
        />
      </div>
    </section>
  );
}

const HIST_X =
  "M235 757H252L258 753H266L270 742L275 731L279 727H283L286 722L291 718L296 720L300 725L304 727L306 707H309L310 727L314 725L319 720L324 716L329 718L332 728L340 733L345 741L349 752L354 757H426V758H235z";
const HIST_Y =
  "M235 857H262L280 855L286 851L295 840L303 829L311 819L316 815H321L326 819L331 824L336 835L343 847L352 854L360 856L375 857H426V858H235z";

function Histograms() {
  return (
    <section className="relative mr-[3px] ml-[2px] flex flex-col">
      <div className="flex h-[27px] items-end justify-between">
        <h2 className="self-center pl-2">B&B Histogram Graph</h2>
        <div className={clsx("relative flex h-6 w-[102px] items-center justify-between pr-[13px] pl-[17px]", PANEL)}>
          count
          <svg viewBox="0 0 29 20" className="h-5 w-[29px]" aria-hidden="true">
            <path d="M0 0h29v20H0z" fill="#fff4d0" />
            <path d="M2 9h6v7H2zM8 3h9v7H8zM18 9h9v7h-9z" fill="#555" />
          </svg>
        </div>
      </div>
      <div className={clsx("border-b border-b-[#888]", PANEL)}>
        <Chart box="175 701 274 103" label="Histogram X">
          <PlotFrame x={235} y={707} w={191} h={51} fill="#fff4d0" />
          <path d={HIST_X} fill="#555" shapeRendering="crispEdges" />
          <YAxis x={233} ticks={[[707, "1582"], [725, "1000"], [757, "0"]]} />
          <XAxis y={760} drop={14} ticks={[[235, "-3.01988"], [294, "0"], [391, "5"], [425, "6.7192"]]} />
          <text transform="translate(190 732) rotate(-90)" textAnchor="middle">count</text>
          <Label x={331} y={792}>X</Label>
        </Chart>
      </div>
      <div className={clsx("border-b border-b-[#888]", PANEL)}>
        <Chart box="175 806 274 105" label="Histogram Y">
          <PlotFrame x={235} y={815} w={191} h={43} fill="#fff4d0" />
          <path d={HIST_Y} fill="#555" shapeRendering="crispEdges" />
          <YAxis x={233} ticks={[[815, "1922"], [858, "0"]]} />
          <XAxis y={861} drop={13} ticks={[[235, "-2.04301"], [243, ""], [330, "-1.5"], [418, ""], [425, ""]]} />
          <Label x={449} y={874} anchor="end">-0.959221</Label>
          <text transform="translate(190 837) rotate(-90)" textAnchor="middle">count</text>
          <Label x={327} y={894}>Y</Label>
        </Chart>
      </div>
      <div className="absolute bottom-0 left-0 flex items-center gap-1 pl-[3px]">
        <label htmlFor="intervals">intervals</label>
        <NumberInput id="intervals" value="200" className="h-[24px] w-[40px]" />
      </div>
    </section>
  );
}

function FillRow() {
  return (
    <section className="col-span-4 flex items-start overflow-hidden pl-[5px]">
      <span className="mt-[5px] mr-[13px]">填充模式</span>
      <label htmlFor="rows" className="mt-[5px] mr-[3px]">行数</label>
      <NumberInput id="rows" value="5" light className="h-[26px] w-[39px]" />
      <label htmlFor="cols" className="mt-[5px] mr-[3px] ml-[8px]">列数</label>
      <NumberInput id="cols" value="9" light className="h-[26px] w-[39px]" />
      <div className="grid grid-cols-9 gap-[4px] border-r-[3px] border-[#f0f0f0] bg-[#a8a8a8] px-[4px] py-[4px]">
        {Array.from({ length: 18 }, (_, i) => (
          <Led key={i} off={i > 0 && i < 4} />
        ))}
      </div>
    </section>
  );
}

function BeamChart() {
  const minorTicks = (x, len, step) => {
    let d = "";
    for (let y = 680; y < 866; y += step) d += `M${x} ${Math.round(y) + 0.5}h${len}`;
    return d;
  };
  return (
    <section className={clsx("col-span-2 mr-px flex flex-col border-b border-b-[#888]", PANEL)}>
      <Chart box="453 674 574 214" label="Turn by turn signal">
        <PlotFrame x={522} y={676} w={456} h={190} />
        <path d="M522 785.500h3v1h4v-1h4v1h4" stroke="#ff4040" strokeWidth="2" fill="none" />
        <path d="M522 810.500h15" stroke="#3399ff" />
        <g shapeRendering="crispEdges">
          <path d={BEAM[0]} stroke="#ff4040" />
          <path d={BEAM[1]} stroke="#3399ff" />
        </g>
        <path d={minorTicks(520, -3, 6.05)} stroke="#000" />
        <path d={minorTicks(980, 3, 7.25)} stroke="#000" />
        <YAxis x={520} ticks={[[677, "6.166"], [704, "5"], [728, "4"], [753, "3"], [777, "2"], [801, "1"], [825, "0"], [865, "-1.652"]]} />
        <YAxis x={980} right ticks={[[677, "-1.195"], [707, "-1.3"], [736, "-1.4"], [765, "-1.5"], [794, "-1.6"], [823, "-1.7"], [865, "-1.846"]]} />
        <XAxis
          y={868}
          drop={14}
          ticks={[[522, "0.0"], [572, "250.0"], [622, "500.0"], [673, "750.0"], [723, "1000.0"], [773, "1250.0"], [823, "1500.0"], [874, "1750.0"], [924, "2000.0"], [974, ""], [977, "2265.0"]]}
        />
      </Chart>
      <div className="flex flex-1 items-center justify-end pt-[2px] pr-[13px]">
        <span className="mr-[61px]">圈数</span>
        <span className="mr-1">I T&T STD/mean</span>
        <output aria-label="I T&T STD/mean" className={clsx("h-[22px] w-[63px] bg-[#d2d2d2] px-[2px] leading-4", INSET)}>0.003182</output>
      </div>
    </section>
  );
}

// ---------- right column ----------

function RightColumn() {
  return (
    <section className="row-span-4 mr-1 ml-px flex flex-col gap-px pt-[6px]">
      <div className="border-b border-t border-t-[#ececec] border-b-[#666] bg-[#b3b3b3]">
        <Chart box="1028 86 297 190" label="Intensity graph">
          <PlotFrame x={1073} y={87} w={249} h={169} />
          <g shapeRendering="crispEdges">
            {BANDS.map(([a, b, color]) => (
              <rect key={a} x="1073" y={a} width="249" height={b - a} fill={color} />
            ))}
            <path d="M1081 127H1322" stroke="#fff" strokeWidth="3" strokeDasharray="17 3 9 2 12 4" />
          </g>
          <YAxis x={1071} ticks={[[88, "0"], [125, "10"], [163, "20"], [200, "30"], [237, "40"], [256, "45"]]} />
        </Chart>
      </div>
      <div className={clsx("border-b border-b-[#888]", PANEL)}>
        <Chart box="1028 279 297 632" label="Trend charts">
          {STRIPS.map((strip) => (
            <g key={strip.y}>
              <PlotFrame x={1091} y={strip.y} w={231} h={57} />
              <path
                d={toLine(strip.data.map((v, i) => [1091 + Math.round(i * 8.55), strip.y + (v / strip.max) * 56 + 0.5]))}
                fill="none"
                stroke={strip.color}
                shapeRendering="crispEdges"
              />
              <path
                d={Array.from({ length: 9 }, (_, i) => `M1089 ${strip.y + 6 * (i + 1) - 3}.5h-3`).join("")}
                stroke="#000"
              />
              <YAxis x={1089} ticks={strip.labels} />
            </g>
          ))}
          {[[1091, "0"], [1134, "5"], [1176, "10"], [1219, "15"], [1261, "20"], [1304, "25"], [1321, "27"]].map(([x, text]) => (
            <Label key={x} x={x} y={882}>{text}</Label>
          ))}
          <Label x={1205} y={901}>Time</Label>
        </Chart>
      </div>
    </section>
  );
}

export default function App() {
  return (
    <div className="flex h-screen overflow-hidden border-b border-[#17476b] bg-[#e1e1e1] pl-[2px] font-['Noto_Sans','Noto_Sans_CJK_SC',sans-serif] text-xs text-black">
      <div className="flex min-w-0 flex-1 flex-col border-l-2 border-[#17476b]">
        <TitleBar />
        <MenuBar />
        <Toolbar />
        <div className="flex min-h-0 flex-1">
          <main className="ml-px grid min-w-0 flex-1 grid-cols-[minmax(0,168fr)_minmax(0,279fr)_minmax(0,77fr)_minmax(0,498fr)_minmax(0,302fr)] grid-rows-[492px_102px_239px_minmax(0,1fr)] overflow-hidden">
            <XYTab />
            <MiddleColumn />
            <RightColumn />
            <NoisePanel />
            <SampleControls />
            <Histograms />
            <BeamChart />
            <FillRow />
          </main>
          <div className="flex w-[15px] flex-col items-center justify-between border-l border-white bg-[#f0f0f0] py-[3px] text-[#555]">
            <ChevronUp size={12} strokeWidth={3} />
            <span className="mt-[189px] mb-[62px] w-full flex-1 bg-[#cdcdcd]" />
            <ChevronDown size={12} strokeWidth={3} />
          </div>
        </div>
        <div className="flex h-[17px] shrink-0 items-center border-t border-white bg-[#f0f0f0] text-[#555]">
          <ChevronLeft size={12} strokeWidth={3} className="mr-[11px] ml-[2px]" />
          <span className="h-full flex-1 bg-[#cdcdcd]" />
          <ChevronRight size={12} strokeWidth={3} className="mr-[18px] ml-[9px]" />
        </div>
      </div>
    </div>
  );
}
